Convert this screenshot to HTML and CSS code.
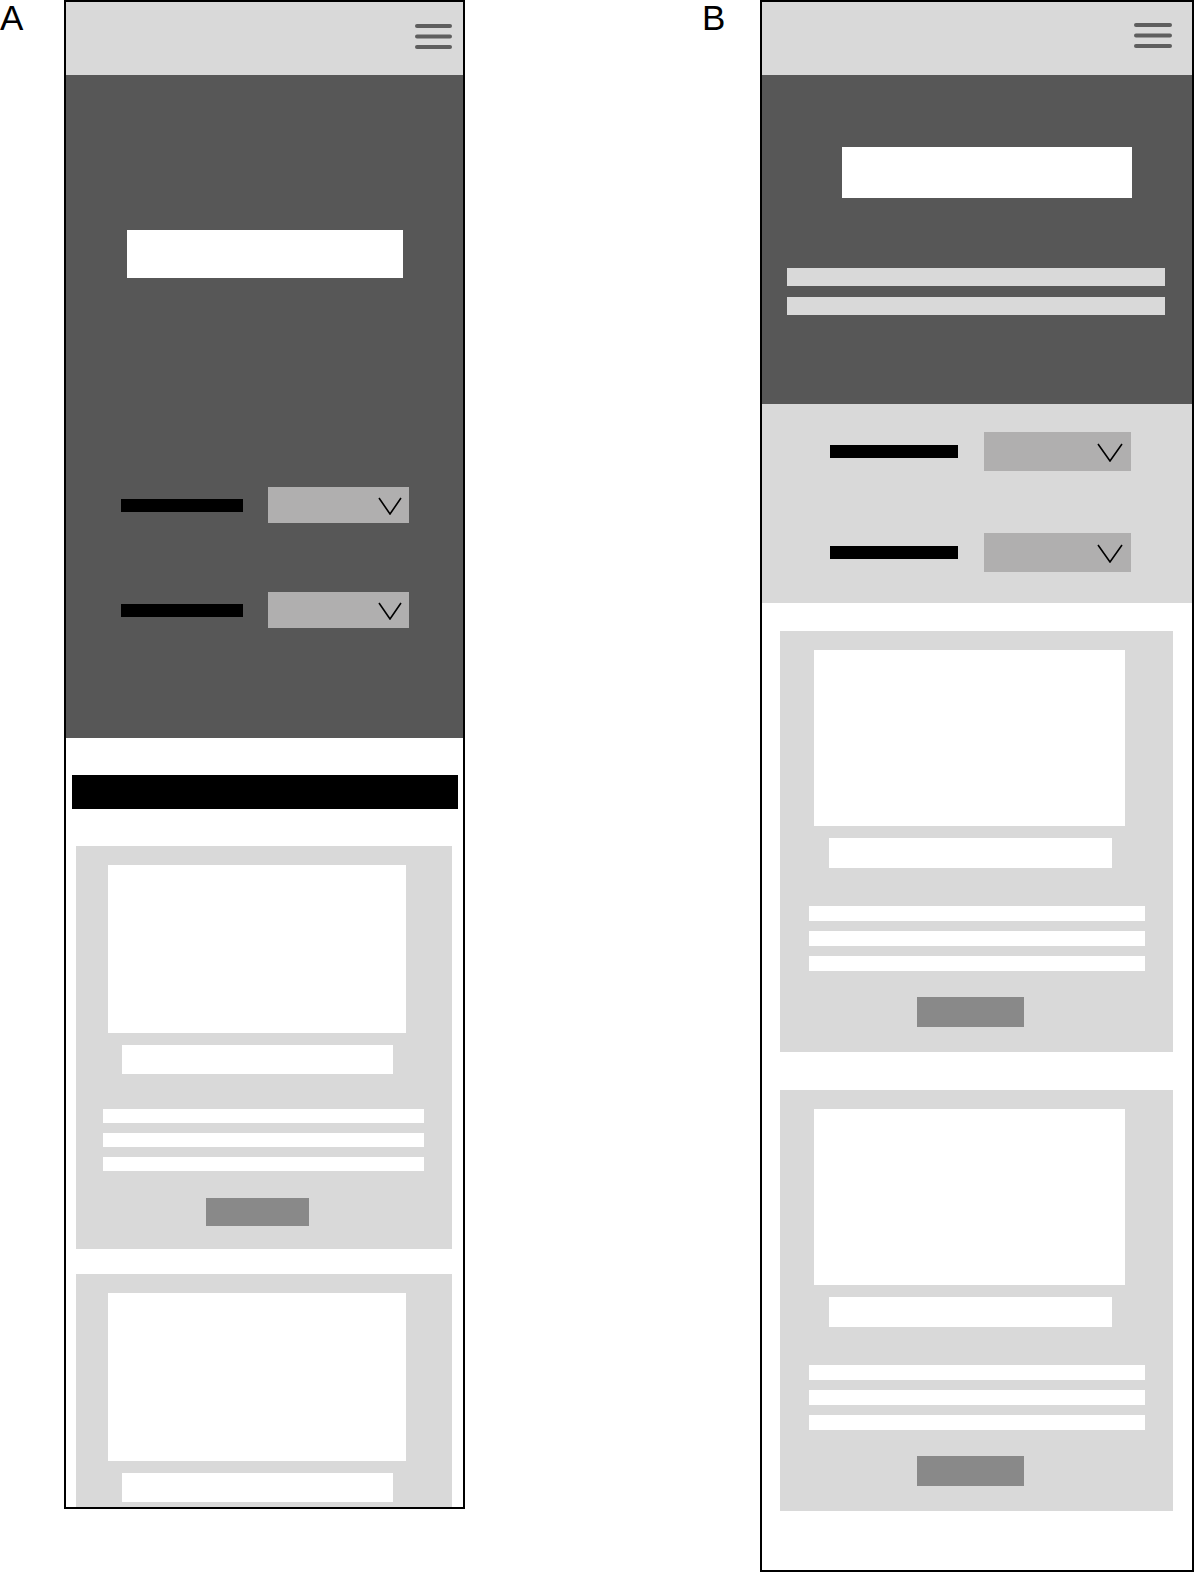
FILE: index.html
```html
<!DOCTYPE html>
<html lang="en">
<head>
    <meta charset="UTF-8">
    <meta name="viewport" content="width=device-width, initial-scale=1.0">
    <title>Mobile Layout Options</title>
    <link rel="stylesheet" href="styles.css">
</head>
<body>
    <div class="board">
        <!-- Option A: filters inside the hero, section title above the cards -->
        <section class="variant variant-a">
            <span class="tag">A</span>
            <div class="phone phone-a">
                <header class="topbar">
                    <svg class="menu-icon" width="37" height="25" viewBox="0 0 37 25">
                        <line x1="2" y1="2" x2="35" y2="2"/>
                        <line x1="2" y1="12.5" x2="35" y2="12.5"/>
                        <line x1="2" y1="23" x2="35" y2="23"/>
                    </svg>
                </header>

                <div class="hero hero-a">
                    <div class="hero-title"></div>
                    <div class="filters">
                        <div class="filter-row">
                            <div class="filter-label"></div>
                            <div class="select">
                                <svg class="chevron" width="24" height="18" viewBox="0 0 24 18">
                                    <polyline points="1,1 12,17 23,1"/>
                                </svg>
                            </div>
                        </div>
                        <div class="filter-row">
                            <div class="filter-label"></div>
                            <div class="select">
                                <svg class="chevron" width="24" height="18" viewBox="0 0 24 18">
                                    <polyline points="1,1 12,17 23,1"/>
                                </svg>
                            </div>
                        </div>
                    </div>
                </div>

                <div class="content">
                    <div class="section-title"></div>
                    <div class="cards">
                        <div class="card">
                            <div class="card-image"></div>
                            <div class="card-title"></div>
                            <div class="card-text">
                                <div class="text-line"></div>
                                <div class="text-line"></div>
                                <div class="text-line"></div>
                            </div>
                            <div class="card-button"></div>
                        </div>
                        <div class="card">
                            <div class="card-image"></div>
                            <div class="card-title"></div>
                            <div class="card-text">
                                <div class="text-line"></div>
                                <div class="text-line"></div>
                                <div class="text-line"></div>
                            </div>
                            <div class="card-button"></div>
                        </div>
                    </div>
                </div>
            </div>
        </section>

        <!-- Option B: intro text in the hero, filters in their own band -->
        <section class="variant variant-b">
            <span class="tag">B</span>
            <div class="phone phone-b">
                <header class="topbar">
                    <svg class="menu-icon" width="38" height="25" viewBox="0 0 38 25">
                        <line x1="2" y1="2" x2="36" y2="2"/>
                        <line x1="2" y1="12.5" x2="36" y2="12.5"/>
                        <line x1="2" y1="23" x2="36" y2="23"/>
                    </svg>
                </header>

                <div class="hero hero-b">
                    <div class="hero-title"></div>
                    <div class="hero-text">
                        <div class="hero-line"></div>
                        <div class="hero-line"></div>
                    </div>
                </div>

                <div class="filters">
                    <div class="filter-row">
                        <div class="filter-label"></div>
                        <div class="select">
                            <svg class="chevron" width="26" height="19" viewBox="0 0 26 19">
                                <polyline points="1,1 13,18 25,1"/>
                            </svg>
                        </div>
                    </div>
                    <div class="filter-row">
                        <div class="filter-label"></div>
                        <div class="select">
                            <svg class="chevron" width="26" height="19" viewBox="0 0 26 19">
                                <polyline points="1,1 13,18 25,1"/>
                            </svg>
                        </div>
                    </div>
                </div>

                <div class="cards">
                    <div class="card">
                        <div class="card-image"></div>
                        <div class="card-title"></div>
                        <div class="card-text">
                            <div class="text-line"></div>
                            <div class="text-line"></div>
                            <div class="text-line"></div>
                        </div>
                        <div class="card-button"></div>
                    </div>
                    <div class="card">
                        <div class="card-image"></div>
                        <div class="card-title"></div>
                        <div class="card-text">
                            <div class="text-line"></div>
                            <div class="text-line"></div>
                            <div class="text-line"></div>
                        </div>
                        <div class="card-button"></div>
                    </div>
                </div>
            </div>
        </section>
    </div>
</body>
</html>
```

FILE: styles.css
```css
* {
    box-sizing: border-box;
}

body {
    font-family: "Liberation Sans", Arial, sans-serif;
    margin: 0;
    background: #fff;
    overflow: hidden;
}

.board {
    display: flex;
    justify-content: space-between;
    align-items: flex-start;
    width: 1194px;
}

.variant {
    display: flex;
    align-items: flex-start;
}

.tag {
    font-size: 35px;
    line-height: 35px;
    color: #000;
}

.variant-a .tag {
    width: 64px;
}

.variant-b .tag {
    width: 58px;
}

/* phone frame */
.phone {
    display: flex;
    flex-direction: column;
    border: 2px solid #000;
    background: #fff;
    overflow: hidden;
}

.phone-a {
    width: 401px;
    height: 1509px;
}

.phone-b {
    width: 434px;
    height: 1572px;
}

.topbar {
    display: flex;
    justify-content: flex-end;
    align-items: flex-start;
    flex-shrink: 0;
    height: 73px;
    background: #d9d9d9;
}

.phone-a .topbar {
    padding: 22px 11px 0 0;
}

.phone-b .topbar {
    padding: 21px 20px 0 0;
}

.menu-icon line {
    stroke: #5e5e5e;
    stroke-width: 4;
    stroke-linecap: round;
}

/* hero */
.hero {
    display: flex;
    flex-direction: column;
    flex-shrink: 0;
    background: #575757;
}

.hero-title {
    background: #fff;
}

.hero-a {
    height: 663px;
    padding-top: 155px;
    align-items: center;
}

.hero-a .hero-title {
    width: 276px;
    height: 48px;
    margin-bottom: 209px;
}

.hero-b {
    height: 329px;
    padding-top: 72px;
}

.hero-b .hero-title {
    width: 290px;
    height: 51px;
    margin-left: 80px;
}

.hero-text {
    display: flex;
    flex-direction: column;
    gap: 11px;
    margin: 70px 0 0 25px;
}

.hero-line {
    width: 378px;
    height: 18px;
    background: #d9d9d9;
}

/* filters */
.filters {
    display: flex;
    flex-direction: column;
    flex-shrink: 0;
}

.filter-row {
    display: flex;
    align-items: center;
}

.filter-label {
    height: 13px;
    background: #000;
}

.select {
    display: flex;
    justify-content: flex-end;
    align-items: flex-start;
    background: #b0afaf;
}

.chevron polyline {
    fill: none;
    stroke: #000;
    stroke-width: 1.6;
}

.hero-a .filters {
    gap: 69px;
}

.hero-a .filter-row {
    gap: 25px;
}

.hero-a .filter-label {
    width: 122px;
}

.hero-a .select {
    width: 141px;
    height: 36px;
    padding: 10px 7px 0 0;
}

.phone-b > .filters {
    height: 199px;
    gap: 62px;
    padding: 28px 0 0 68px;
    background: #d9d9d9;
}

.phone-b .filter-row {
    gap: 26px;
}

.phone-b .filter-label {
    width: 128px;
}

.phone-b .select {
    width: 147px;
    height: 39px;
    padding: 11px 8px 0 0;
}

/* cards */
.content {
    padding-top: 37px;
}

.section-title {
    width: 386px;
    height: 34px;
    margin-left: 6px;
    background: #000;
}

.cards {
    display: flex;
    flex-direction: column;
    flex-shrink: 0;
}

.card {
    display: flex;
    flex-direction: column;
    align-items: flex-start;
    flex-shrink: 0;
    background: #d9d9d9;
}

.card-image,
.card-title,
.text-line {
    background: #fff;
}

.card-text {
    display: flex;
    flex-direction: column;
    gap: 10px;
}

.card-button {
    background: #898989;
}

.phone-a .cards {
    gap: 25px;
    margin: 37px 0 0 10px;
}

.phone-a .card {
    width: 376px;
    padding: 19px 0 23px;
}

.phone-a .card-image {
    width: 298px;
    height: 168px;
    margin-left: 32px;
}

.phone-a .card-title {
    width: 271px;
    height: 29px;
    margin: 12px 0 0 46px;
}

.phone-a .card-text {
    margin: 35px 0 0 27px;
}

.phone-a .text-line {
    width: 321px;
    height: 14px;
}

.phone-a .card-button {
    width: 103px;
    height: 28px;
    margin: 27px 0 0 130px;
}

.phone-b .cards {
    gap: 38px;
    padding: 28px 0 0 18px;
}

.phone-b .card {
    width: 393px;
    padding: 19px 0 25px;
}

.phone-b .card-image {
    width: 311px;
    height: 176px;
    margin-left: 34px;
}

.phone-b .card-title {
    width: 283px;
    height: 30px;
    margin: 12px 0 0 49px;
}

.phone-b .card-text {
    margin: 38px 0 0 29px;
}

.phone-b .text-line {
    width: 336px;
    height: 15px;
}

.phone-b .card-button {
    width: 107px;
    height: 30px;
    margin: 26px 0 0 137px;
}
```
